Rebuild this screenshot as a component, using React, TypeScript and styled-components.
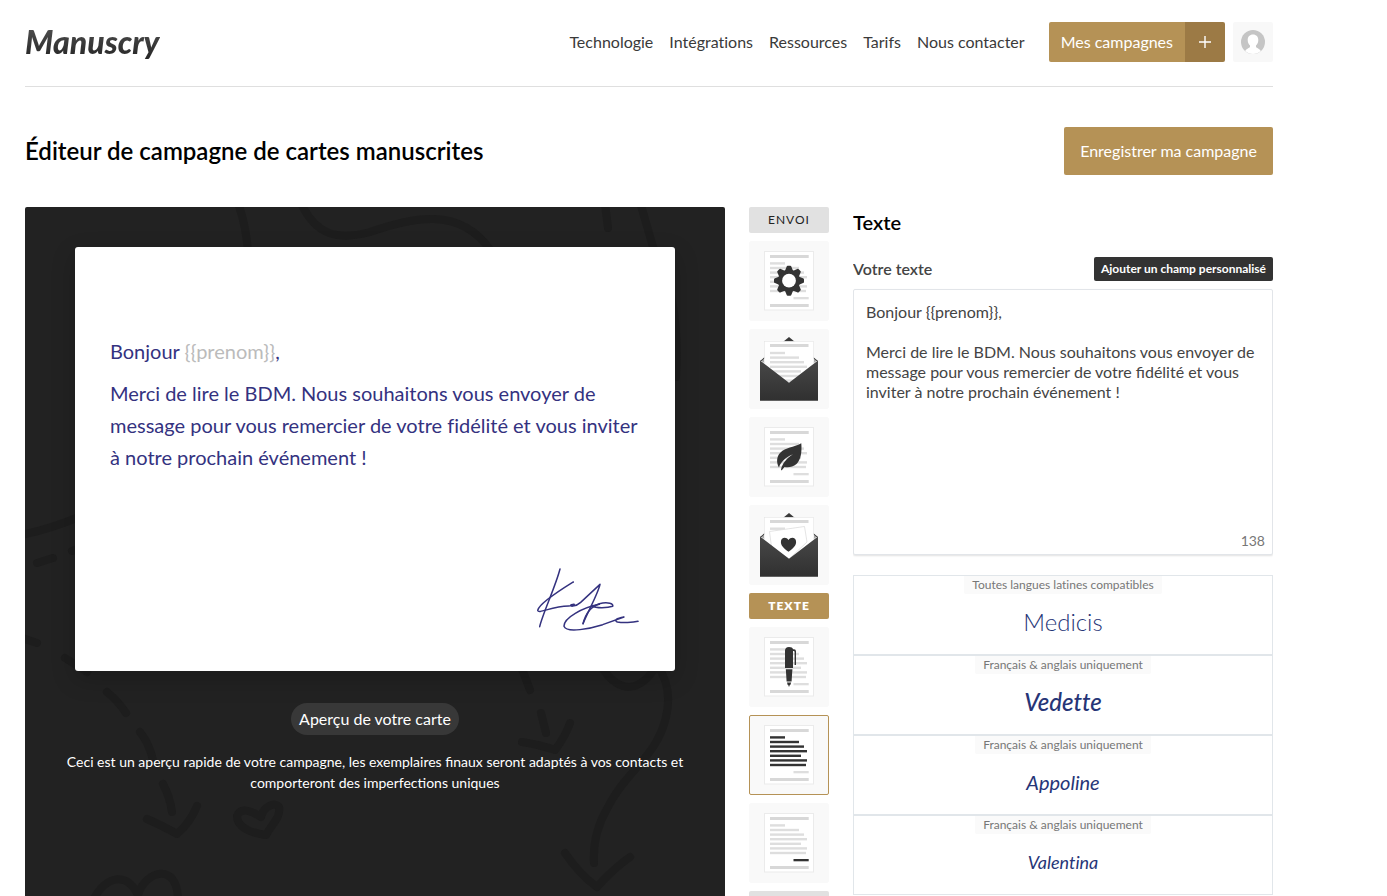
import React, { useState } from "react";
import styled, { createGlobalStyle } from "styled-components";

const gold = "#b59256";
const ink = "#34327f";

const GlobalStyle = createGlobalStyle`
  *, *::before, *::after { box-sizing: border-box; }
  body { margin: 0; background: #fff; color: #333; font-family: Lato, "Liberation Sans", sans-serif; font-size: 16px; line-height: 20px; font-variant-ligatures: none; }
  button, textarea, input { font: inherit; font-variant-ligatures: none; }
  h1, h2, p { margin: 0; }
`;

const Page = styled.div`
  display: flex;
  flex-direction: column;
  height: 100vh;
  overflow: hidden;
  padding: 0 114px 0 25px;
`;

const Header = styled.header`
  display: flex;
  flex: none;
  align-items: center;
  justify-content: space-between;
  padding: 22px 0 24px;
  border-bottom: 1px solid #dfdfdf;
`;

const Logo = styled.a`
  font-size: 32px;
  line-height: 40px;
  font-weight: 900;
  font-style: italic;
  text-decoration: none;
  color: transparent;
  background: linear-gradient(#555, #222);
  background-clip: text;
`;

const HeaderRight = styled.div`
  display: flex;
  align-items: center;
  gap: 8px;
`;

const Nav = styled.nav`
  display: flex;
  gap: 16px;
  margin-right: 16px;
`;

const NavLink = styled.a`
  color: #3a3a3a;
  text-decoration: none;
`;

const SplitButton = styled.div`
  display: flex;
  height: 40px;
  border-radius: 2px;
  overflow: hidden;
`;

const GoldButton = styled.button<{ $tall?: boolean }>`
  height: ${(p) => (p.$tall ? 48 : 40)}px;
  padding: 0 ${(p) => (p.$tall ? 16 : 12)}px;
  border: 0;
  border-radius: ${(p) => (p.$tall ? 2 : 0)}px;
  background: ${gold};
  color: #fff;
`;

const AddButton = styled.button`
  display: grid;
  place-items: center;
  width: 40px;
  padding: 0;
  border: 0;
  background: #9c7a45;
  color: #fff;
`;

const AvatarButton = styled.button`
  display: grid;
  place-items: center;
  width: 40px;
  height: 40px;
  padding: 0;
  border: 0;
  border-radius: 2px;
  background: #f8f8f8;
`;

const TitleBar = styled.div`
  display: flex;
  flex: none;
  align-items: center;
  justify-content: space-between;
  padding: 40px 0 32px;
`;

const Title = styled.h1`
  font-size: 24px;
  line-height: 32px;
  font-weight: 600;
  color: #000;
`;

const Editor = styled.main`
  display: grid;
  flex: 1;
  min-height: 0;
  grid-template-columns: minmax(0, 1fr) 80px 420px;
  grid-template-rows: minmax(0, 1fr);
  gap: 24px;
`;

const Preview = styled.section`
  position: relative;
  padding: 40px 50px;
  border-radius: 2px 2px 0 0;
  background: #222;
  color: #fff;
  text-align: center;
`;

const Doodles = styled.svg`
  position: absolute;
  inset: 0;
  width: 100%;
  height: 100%;
`;

const PreviewContent = styled.div`
  position: relative;
  display: flex;
  flex-direction: column;
  align-items: center;
`;

const Card = styled.article`
  display: flex;
  flex-direction: column;
  width: 100%;
  aspect-ratio: 600 / 424;
  padding: 88px 35px 39px;
  border-radius: 3px;
  background: #fff;
  box-shadow: 0 8px 24px rgba(0, 0, 0, 0.2);
  color: ${ink};
  font-size: 20px;
  line-height: 32px;
  text-align: left;
`;

const CardParagraph = styled.p`
  margin-bottom: 10px;
  white-space: pre;
`;

const MergeField = styled.span`
  color: #bbb;
`;

const Signature = styled.svg`
  align-self: flex-end;
  width: 104px;
  height: 65px;
  margin-top: auto;
`;

const Pill = styled.h2`
  margin-top: 32px;
  padding: 6px 8px;
  border-radius: 16px;
  background: #383838;
  font-size: 16px;
  line-height: 20px;
  font-weight: 400;
`;

const Notice = styled.p`
  max-width: 620px;
  margin: 16px -10px 0;
  font-size: 14px;
  line-height: 21px;
  font-variant-ligatures: normal;
`;

const Rail = styled.nav`
  display: flex;
  flex-direction: column;
  gap: 8px;
  overflow: hidden;
`;

const RailLabel = styled.div<{ $active?: boolean }>`
  flex: none;
  height: 26px;
  border-radius: 2px;
  background: ${(p) => (p.$active ? gold : "#e1e1e1")};
  color: ${(p) => (p.$active ? "#fff" : "#222")};
  font-size: 12px;
  line-height: 26px;
  font-weight: ${(p) => (p.$active ? 800 : 400)};
  letter-spacing: 1px;
  text-align: center;
`;

const Tile = styled.button<{ $active?: boolean }>`
  display: grid;
  place-items: center;
  flex: none;
  height: 80px;
  padding: 0;
  border: 1px solid ${(p) => (p.$active ? gold : "#f9f9f9")};
  border-radius: 2px;
  background: #f9f9f9;
`;

const TileArt = styled.svg`
  display: block;
  width: 80px;
  height: 80px;
  margin: -1px;
`;

const Settings = styled.section`
  display: flex;
  flex-direction: column;
  overflow: hidden;
`;

const SettingsTitle = styled.h2`
  flex: none;
  margin-bottom: 20px;
  font-size: 20px;
  line-height: 30px;
  font-weight: 600;
  color: #000;
`;

const FieldHead = styled.div`
  display: flex;
  flex: none;
  align-items: center;
  justify-content: space-between;
  margin-bottom: 8px;
`;

const FieldLabel = styled.label`
  font-weight: 600;
  color: #444;
`;

const DarkButton = styled.button`
  height: 24px;
  padding: 0 7px;
  border: 0;
  border-radius: 2px;
  background: #333;
  color: #fff;
  font-size: 12px;
  font-weight: 700;
`;

const TextField = styled.div`
  position: relative;
  flex: none;
  height: 266px;
  margin-bottom: 20px;
`;

const TextArea = styled.textarea`
  display: block;
  width: 100%;
  height: 100%;
  padding: 12px;
  border: 1px solid #e2e5e9;
  border-radius: 2px;
  box-shadow: 0 1px 2px rgba(0, 0, 0, 0.12);
  color: #444;
  line-height: 20px;
  font-variant-ligatures: normal;
  resize: none;
  outline: 0;
`;

const Counter = styled.output`
  position: absolute;
  right: 8px;
  bottom: 4px;
  font-size: 14px;
  color: #777;
`;

const FontList = styled.div`
  display: flex;
  flex-direction: column;
`;

const FontOption = styled.label`
  display: flex;
  flex: none;
  flex-direction: column;
  align-items: center;
  height: 80px;
  border: 1px solid #e1e6ea;
`;

const FontRadio = styled.input`
  position: absolute;
  width: 1px;
  height: 1px;
  margin: 0;
  opacity: 0;
`;

const FontHint = styled.span`
  padding: 0 8px;
  border-radius: 0 0 2px 2px;
  background: #fafafa;
  color: #777;
  font-size: 12px;
  line-height: 18px;
`;

const FontName = styled.span<{ $weight: number; $italic: boolean; $size: number }>`
  margin: 14px 0;
  color: #263577;
  font-size: ${(p) => p.$size}px;
  line-height: 28px;
  font-weight: ${(p) => p.$weight};
  font-style: ${(p) => (p.$italic ? "italic" : "normal")};
`;

const lineWidths = [15, 29, 34, 37, 31, 37, 36];

function SheetLines({ top, color = "#dedede" }: { top: number; color?: string }) {
  return (
    <g fill={color}>
      {lineWidths.map((w, i) => (
        <rect key={i} x="21" y={top + i * 4.6} width={w} height="2.4" />
      ))}
    </g>
  );
}

function Sheet({ lines, closing }: { lines?: string; closing?: string }) {
  return (
    <g>
      <rect x="15.5" y="10.5" width="49" height="58.5" fill="#fff" stroke="#ebebeb" />
      <rect x="21" y="14" width="38.7" height="3" fill="#d8d8d8" />
      <SheetLines top={21.2} color={lines} />
      <rect x="44.5" y="56" width="15.2" height="2.3" fill={closing ?? "#dedede"} />
      <rect x="21" y="63" width="38.7" height="3" fill="#d8d8d8" />
    </g>
  );
}

function Envelope({ children }: { children?: React.ReactNode }) {
  return (
    <g>
      <defs>
        <linearGradient id="envelope" x1="0" y1="0" x2="0" y2="1">
          <stop offset="0" stopColor="#484848" />
          <stop offset="1" stopColor="#303030" />
        </linearGradient>
      </defs>
      <path d="M11 32 40 8 69 32Z" fill="#3a3a3a" />
      <path d="M12.5 32 17 28H63l4.500 4-27.500 20Z" fill="#aaa" />
      <path d="M15.500 12.500h49v26L40 54 15.500 38.500Z" fill="#fff" />
      <rect x="15.500" y="12.500" width="49" height="20" fill="#fff" stroke="#e4e4e4" strokeWidth=".6" />
      <path d="M15.500 30h49v10L40 54 15.500 40Z" fill="#fff" />
      <rect x="21" y="15" width="38.500" height="3" fill="#d8d8d8" />
      {children}
      <path d="M11 31.500 40 53.700 69 31.500V71.700H11Z" fill="url(#envelope)" />
    </g>
  );
}

const heartPath =
  "M0 7.500C-5 3.800-7.600 1-7.600-2.400-7.600-6.800-2.400-8 0-4.300 2.400-8 7.600-6.800 7.600-2.400 7.600 1 5 3.800 0 7.500Z";

function GearArt() {
  return (
    <>
      <Sheet />
      <g transform="translate(40 39.700)" fill="#333">
        {[0, 45, 90, 135, 180, 225, 270, 315].map((a) => (
          <path key={a} d="M-4.200-9.500-2.400-14q.2-1 1.200-1H1.200q1 0 1.200 1L4.200-9.500Z" transform={`rotate(${a})`} />
        ))}
        <circle r="11" />
        <circle r="6.900" fill="#fff" />
      </g>
    </>
  );
}

function LeafArt() {
  return (
    <>
      <Sheet />
      <path
        d="M52.300 26.300C53 35 52 42.500 47.500 47 43.500 50.600 38.500 50.400 35.500 49.900L32.600 53.500 32 52.500C33.300 46.500 37.500 41.500 44 37.300 36 40.500 31.500 45.500 30 50.500 27.200 46 27.400 39.500 31.500 35.600 36.500 30.500 44.500 30.500 52.300 26.300Z"
        fill="#333"
      />
    </>
  );
}

function PenArt() {
  return (
    <>
      <Sheet />
      <g fill="#333">
        <path d="M36 41V23.500Q36 20 40 20q3.500 0 4 2.200h1q2 0 2 2V38h-1.400V25q0-1-1-1H44V41Z" />
        <path d="M36.800 42.200h6.600L42.600 54.500h-5Z" />
        <path d="M38 55.500h4.200L41.300 58h-.5L40 60l-.8-2h-.5Z" />
      </g>
    </>
  );
}

function HeartEnvelopeArt() {
  return (
    <Envelope>
      <rect x="21" y="22.500" width="15" height="2.400" fill="#dedede" />
      <path d="M20.500 26.500 55.500 21.500 58 37 40 54 22.500 42Z" fill="#fff" stroke="#ddd" strokeWidth=".8" />
      <path d={heartPath} transform="translate(39.500 39.300)" fill="#333" />
    </Envelope>
  );
}

const rail = [
  {
    label: "ENVOI",
    tiles: [
      { name: "Paramètres", art: <GearArt /> },
      { name: "Enveloppe", art: <Envelope><SheetLines top={22.800} /></Envelope> },
      { name: "Papier", art: <LeafArt /> },
      { name: "Carte jointe", art: <HeartEnvelopeArt /> },
    ],
  },
  {
    label: "TEXTE",
    active: true,
    tiles: [
      { name: "Stylo", art: <PenArt /> },
      { name: "Texte", art: <Sheet lines="#333" />, active: true },
      { name: "Signature", art: <Sheet closing="#333" /> },
    ],
  },
];

const fonts = [
  { name: "Medicis", hint: "Toutes langues latines compatibles", weight: 300, italic: false, size: 24 },
  { name: "Vedette", hint: "Français & anglais uniquement", weight: 500, italic: true, size: 24 },
  { name: "Appoline", hint: "Français & anglais uniquement", weight: 400, italic: true, size: 20 },
  { name: "Valentina", hint: "Français & anglais uniquement", weight: 400, italic: true, size: 18 },
];

const links = ["Technologie", "Intégrations", "Ressources", "Tarifs", "Nous contacter"];

const message =
  "Bonjour {{prenom}},\n\nMerci de lire le BDM. Nous souhaitons vous envoyer de message pour vous remercier de votre fidélité et vous inviter à notre prochain événement !";

export default function App() {
  const [text, setText] = useState(message);
  const [font, setFont] = useState("Medicis");

  return (
    <Page>
      <GlobalStyle />
      <Header>
        <Logo href="#">Manuscry</Logo>
        <HeaderRight>
          <Nav>
            {links.map((l) => (
              <NavLink key={l} href="#">{l}</NavLink>
            ))}
          </Nav>
          <SplitButton>
            <GoldButton>Mes campagnes</GoldButton>
            <AddButton aria-label="Nouvelle campagne">
              <svg width="12" height="12" viewBox="0 0 12 12" stroke="currentColor" strokeWidth="1.400">
                <path d="M6 0V12M0 6H12" />
              </svg>
            </AddButton>
          </SplitButton>
          <AvatarButton aria-label="Mon compte">
            <svg width="24" height="24" viewBox="0 0 24 24">
              <circle cx="12" cy="12" r="12" fill="#c5c5c5" />
              <path
                d="M12 4.500c3.300 0 5.300 2.300 5.300 5.500 0 2.600-1 4.400-2.300 5.500v1.300c.4 1.500 3.600 1.800 4.800 4.200C17.600 23 15 24 12 24s-5.600-1-7.800-3c1.200-2.400 4.400-2.700 4.800-4.200v-1.300C7.700 14.400 6.700 12.600 6.700 10c0-3.200 2-5.500 5.300-5.500Z"
                fill="#fff"
              />
            </svg>
          </AvatarButton>
        </HeaderRight>
      </Header>

      <TitleBar>
        <Title>Éditeur de campagne de cartes manuscrites</Title>
        <GoldButton $tall>Enregistrer ma campagne</GoldButton>
      </TitleBar>

      <Editor>
        <Preview>
          <Doodles
            viewBox="0 0 700 689"
            preserveAspectRatio="xMidYMin slice"
            fill="none"
            stroke="#1d1d1d"
            strokeWidth="8"
            strokeLinecap="round"
            strokeLinejoin="round"
            aria-hidden="true"
          >
            <path d="M213-4Q221 18 223 45" />
            <path d="M275-6C290 28 312 34 345 25 385 11 435-2 466 44" />
            <path d="M580-3 583 21M615-5 628 40Q656 90 651 170" />
            <path d="M-4 328Q25 322 54 310M12 356 28 351M47 344 56 341" />
            <path d="M-3 431 12 436M40 451 62 465M82 485Q93 494 101 506M115 525Q124 536 128 553M138 577Q145 590 147 605" />
            <path d="M122 612Q140 620 152 627 165 616 172 599" />
            <path d="M241 628C225 626 212 620 212 609 216 599 228 605 236 610 238 600 250 594 254 600 256 610 247 617 241 628Z" />
            <path d="M68 694C76 674 100 660 113 688 120 664 152 654 153 692" />
            <path d="M497 462 505 483M516 506 521 526M497 535Q516 538 530 543 540 530 545 516" />
            <path d="M578 462Q590 480 605 480 620 478 632 458 648 480 641 510C632 550 600 565 583 600 570 622 568 640 569 656" />
            <path d="M540 646Q555 668 572 680 588 662 605 650" />
          </Doodles>
          <PreviewContent>
            <Card>
              <CardParagraph>
                Bonjour <MergeField>{"{{prenom}}"}</MergeField>,
              </CardParagraph>
              <CardParagraph>
                {"Merci de lire le BDM. Nous souhaitons vous envoyer de\nmessage pour vous remercier de votre fidélité et vous inviter\nà notre prochain événement !"}
              </CardParagraph>
              <Signature
                viewBox="500 110 312 195"
                fill="none"
                stroke={ink}
                strokeWidth="4.500"
                strokeLinecap="round"
                strokeLinejoin="round"
                role="img"
                aria-label="Signature"
              >
                <path d="M572 116C558 170 520 250 511 289" />
                <path d="M612 155C575 178 510 218 505 240 508 252 545 228 598 227 614 227 622 218 606 223 598 228 616 232 634 216L692 162C686 190 655 245 641 280" />
                <path d="M641 280C650 245 665 228 690 220 716 214 734 220 730 228 715 233 680 234 668 227" />
                <path d="M690 222C640 232 583 262 584 288 592 310 665 294 700 283L764 260C740 264 734 270 744 275 760 278 790 277 806 273" />
              </Signature>
            </Card>
            <Pill>Aperçu de votre carte</Pill>
            <Notice>
              Ceci est un aperçu rapide de votre campagne, les exemplaires finaux seront adaptés à vos contacts et
              comporteront des imperfections uniques
            </Notice>
          </PreviewContent>
        </Preview>

        <Rail>
          {rail.map((group) => (
            <React.Fragment key={group.label}>
              <RailLabel $active={group.active}>{group.label}</RailLabel>
              {group.tiles.map((tile) => (
                <Tile key={tile.name} $active={"active" in tile} aria-label={tile.name}>
                  <TileArt viewBox="0 0 80 80">{tile.art}</TileArt>
                </Tile>
              ))}
            </React.Fragment>
          ))}
          <RailLabel />
        </Rail>

        <Settings>
          <SettingsTitle>Texte</SettingsTitle>
          <FieldHead>
            <FieldLabel htmlFor="message">Votre texte</FieldLabel>
            <DarkButton>Ajouter un champ personnalisé</DarkButton>
          </FieldHead>
          <TextField>
            <TextArea id="message" spellCheck={false} value={text} onChange={(e) => setText(e.target.value)} />
            <Counter htmlFor="message">138</Counter>
          </TextField>
          <FontList role="radiogroup" aria-label="Écriture">
            {fonts.map((f) => (
              <FontOption key={f.name}>
                <FontRadio type="radio" name="font" checked={font === f.name} onChange={() => setFont(f.name)} />
                <FontHint>{f.hint}</FontHint>
                <FontName $weight={f.weight} $italic={f.italic} $size={f.size}>{f.name}</FontName>
              </FontOption>
            ))}
          </FontList>
        </Settings>
      </Editor>
    </Page>
  );
}
